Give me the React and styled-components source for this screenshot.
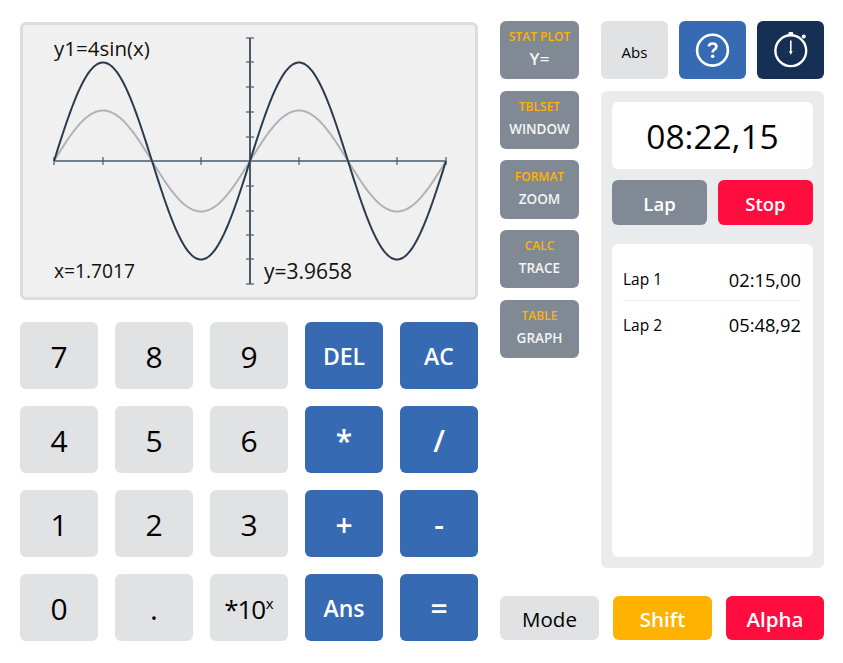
import styled, { createGlobalStyle } from "styled-components";

const GlobalStyle = createGlobalStyle`
  html, body { margin: 0; padding: 0; background: #fff; }
  body { font-family: "Open Sans", "Noto Sans", sans-serif; color: #000; }
`;

const Page = styled.div`
  width: 843px;
  height: 663px;
  box-sizing: border-box;
  padding: 21px 19px 22px 20px;
  display: flex;
  gap: 22px;
`;

const LeftCol = styled.div`
  width: 458px;
  padding-top: 1px;
  display: flex;
  flex-direction: column;
  gap: 22px;
`;

const Screen = styled.div`
  position: relative;
  height: 278px;
  box-sizing: border-box;
  background: #f0f0f0;
  border: 3px solid #dcdddd;
  border-radius: 6px;
`;

const Graph = styled.svg`
  position: absolute;
  left: -3px;
  top: -3px;
`;

const ScreenText = styled.span`
  position: absolute;
  left: ${(p) => p.$x}px;
  top: ${(p) => p.$y}px;
  font-size: ${(p) => p.$size}px;
  line-height: 26px;
  color: #111;
`;

const Keypad = styled.div`
  display: grid;
  grid-template-columns: repeat(5, 78px);
  grid-auto-rows: 67px;
  gap: 17px;
`;

const Key = styled.button`
  border: 0;
  padding: ${(p) => (p.$blue ? "1px 0 0" : "2px 0 0")};
  border-radius: 6px;
  font-family: inherit;
  font-size: ${(p) => (p.$sym ? "30px" : p.$blue ? "23px" : p.$small ? "26px" : "30px")};
  font-weight: ${(p) => (p.$blue ? 600 : 400)};
  letter-spacing: ${(p) => (p.$small ? "-1.2px" : "0")};
  color: ${(p) => (p.$blue ? "#fff" : "#000")};
  background: ${(p) => (p.$blue ? "#366bb3" : "#e1e2e4")};

  sup {
    font-size: 15px;
    line-height: 0;
    letter-spacing: 0;
    margin-left: 1px;
  }
`;

const RightArea = styled.div`
  width: 324px;
  display: flex;
  flex-direction: column;
  justify-content: space-between;
`;

const UpperArea = styled.div`
  display: flex;
  gap: 22px;
`;

const FnCol = styled.div`
  width: 79px;
  display: flex;
  flex-direction: column;
  gap: 11.4px;
`;

const FnKey = styled.button`
  height: 58.3px;
  border: 0;
  padding: 0 0 4px;
  border-radius: 6px;
  background: #818a94;
  font-family: inherit;
  display: flex;
  flex-direction: column;
  align-items: center;
  justify-content: center;
  gap: 5px;
`;

const FnTop = styled.span`
  font-size: 12px;
  line-height: 17px;
  font-weight: 600;
  color: #ffb300;
`;

const FnMain = styled.span`
  font-size: ${(p) => (p.$big ? "17px" : "13.5px")};
  line-height: 18px;
  font-weight: 600;
  color: #f4f5f6;
`;

const SideCol = styled.div`
  width: 223px;
  display: flex;
  flex-direction: column;
  gap: 12px;
`;

const TopRow = styled.div`
  display: flex;
  justify-content: space-between;
`;

const TopButton = styled.button`
  width: 67px;
  height: 58px;
  border: 0;
  padding: ${(p) => (p.$text ? "4px 0 0" : "0")};
  border-radius: 6px;
  background: ${(p) => p.$bg};
  color: #000;
  font-family: inherit;
  font-size: 15px;
  display: flex;
  align-items: center;
  justify-content: center;
`;

const Panel = styled.div`
  height: 477px;
  box-sizing: border-box;
  padding: 11px;
  border-radius: 6px;
  background: #eaebed;
  display: flex;
  flex-direction: column;
`;

const Clock = styled.div`
  height: 67px;
  box-sizing: border-box;
  padding-top: 1px;
  border-radius: 6px;
  background: #fff;
  font-size: 33.5px;
  display: flex;
  align-items: center;
  justify-content: center;
`;

const ClockButtons = styled.div`
  display: flex;
  gap: 11px;
  margin: 11px 0 19px;
`;

const ClockButton = styled.button`
  flex: 1;
  height: 45px;
  border: 0;
  padding: 2px 0 0;
  border-radius: 6px;
  background: ${(p) => p.$bg};
  color: #fff;
  font-family: inherit;
  font-size: 18.5px;
  font-weight: 600;
`;

const LapList = styled.div`
  flex: 1;
  box-sizing: border-box;
  padding: 18px 12px 0 11px;
  border-radius: 6px;
  background: #fff;
`;

const LapRow = styled.div`
  height: 39px;
  box-sizing: border-box;
  padding-bottom: 4px;
  display: flex;
  align-items: center;
  justify-content: space-between;
  border-bottom: ${(p) => (p.$line ? "1px solid #eceded" : "0")};
  margin-bottom: 6px;
`;

const LapName = styled.span`
  font-size: 15.5px;
`;

const LapTime = styled.span`
  font-size: 18.3px;
`;

const BottomRow = styled.div`
  display: flex;
  justify-content: space-between;
  margin-bottom: 1px;
`;

const ModeButton = styled.button`
  width: ${(p) => p.$w}px;
  height: 44px;
  border: 0;
  padding: 1px 0 0;
  border-radius: 6px;
  background: ${(p) => p.$bg};
  color: ${(p) => (p.$dark ? "#000" : "#fff")};
  font-family: inherit;
  font-size: 20.5px;
  font-weight: ${(p) => (p.$dark ? 400 : 600)};
`;

function sinePath(amp) {
  const pts = [];
  for (let px = 54; px <= 446; px += 2) {
    const y = 161 - amp * Math.sin(((px - 250) / 196) * 2 * Math.PI);
    pts.push(`${px},${y.toFixed(2)}`);
  }
  return "M" + pts.join("L");
}

const xTicks = [54, 103, 201, 299, 397, 446];
const yTicks = [38, 62, 87, 112, 137, 186, 211, 235, 259, 284];

function SineGraph() {
  return (
    <Graph width="458" height="278" viewBox="0 0 458 278">
      <g transform="translate(-20 -22)">
        <g stroke="#4a5a6a" strokeWidth="1.6" fill="none">
          <path d="M54 161H446" />
          <path d="M250 38V284" strokeWidth="2" />
          {xTicks.map((x) => (
            <path key={x} d={`M${x} 157V165`} strokeWidth="1.2" />
          ))}
          {yTicks.map((y) => (
            <path key={y} d={`M246 ${y}H254`} strokeWidth="1.2" />
          ))}
        </g>
        <path d={sinePath(50.5)} fill="none" stroke="#b0b3b6" strokeWidth="2" />
        <path d={sinePath(98.5)} fill="none" stroke="#2b3b4f" strokeWidth="2" />
      </g>
    </Graph>
  );
}

const HelpIcon = () => (
  <svg width="36" height="36" viewBox="0 0 36 36" fill="none">
    <circle cx="17.5" cy="18.2" r="15.4" stroke="#fff" strokeWidth="2.6" />
    <path
      d="M13.8 14.4c.3-1.8 1.7-2.9 3.8-2.9 2.3 0 3.8 1.2 3.8 3 0 1.4-.7 2.2-2 3-1.2.8-1.7 1.4-1.7 2.6v.4"
      stroke="#fff"
      strokeWidth="2.7"
    />
    <circle cx="17.7" cy="24.3" r="1.8" fill="#fff" />
  </svg>
);

const StopwatchIcon = () => (
  <svg width="36" height="36" viewBox="0 0 36 36" fill="none">
    <circle cx="17.8" cy="18.7" r="15.4" stroke="#fff" strokeWidth="2.4" />
    <circle cx="17.8" cy="1.8" r="2.4" fill="#fff" />
    <circle cx="30.8" cy="4.4" r="2" fill="#fff" />
    <path d="M17.8 8.5V20" stroke="#fff" strokeWidth="1.6" />
    <path d="M16 19h3.6l-1.8 4z" fill="#fff" />
  </svg>
);

const keys = [
  ["7"], ["8"], ["9"], ["DEL", true], ["AC", true],
  ["4"], ["5"], ["6"], ["*", true, true], ["/", true, true],
  ["1"], ["2"], ["3"], ["+", true, true], ["-", true, true],
];

const fnKeys = [
  ["STAT PLOT", "Y="],
  ["TBLSET", "WINDOW"],
  ["FORMAT", "ZOOM"],
  ["CALC", "TRACE"],
  ["TABLE", "GRAPH"],
];

export default function App() {
  return (
    <Page>
      <GlobalStyle />
      <LeftCol>
        <Screen>
          <SineGraph />
          <ScreenText $x={31} $y={10} $size={20.5}>y1=4sin(x)</ScreenText>
          <ScreenText $x={31} $y={233} $size={19.2}>x=1.7017</ScreenText>
          <ScreenText $x={241} $y={233} $size={21}>y=3.9658</ScreenText>
        </Screen>
        <Keypad>
          {keys.map(([label, blue, sym]) => (
            <Key key={label} $blue={blue} $sym={sym}>{label}</Key>
          ))}
          <Key>0</Key>
          <Key>.</Key>
          <Key $small>*10<sup>x</sup></Key>
          <Key $blue>Ans</Key>
          <Key $blue $sym>=</Key>
        </Keypad>
      </LeftCol>
      <RightArea>
        <UpperArea>
          <FnCol>
            {fnKeys.map(([top, main]) => (
              <FnKey key={main}>
                <FnTop>{top}</FnTop>
                <FnMain $big={main === "Y="}>{main}</FnMain>
              </FnKey>
            ))}
          </FnCol>
          <SideCol>
            <TopRow>
              <TopButton $bg="#e1e2e4" $text>Abs</TopButton>
              <TopButton $bg="#366bb3"><HelpIcon /></TopButton>
              <TopButton $bg="#152f55"><StopwatchIcon /></TopButton>
            </TopRow>
            <Panel>
              <Clock>08:22,15</Clock>
              <ClockButtons>
                <ClockButton $bg="#818a94">Lap</ClockButton>
                <ClockButton $bg="#ff0d3f">Stop</ClockButton>
              </ClockButtons>
              <LapList>
                <LapRow $line>
                  <LapName>Lap 1</LapName>
                  <LapTime>02:15,00</LapTime>
                </LapRow>
                <LapRow>
                  <LapName>Lap 2</LapName>
                  <LapTime>05:48,92</LapTime>
                </LapRow>
              </LapList>
            </Panel>
          </SideCol>
        </UpperArea>
        <BottomRow>
          <ModeButton $w={99} $bg="#e1e2e4" $dark>Mode</ModeButton>
          <ModeButton $w={99} $bg="#ffb300">Shift</ModeButton>
          <ModeButton $w={98} $bg="#ff0d3f">Alpha</ModeButton>
        </BottomRow>
      </RightArea>
    </Page>
  );
}
